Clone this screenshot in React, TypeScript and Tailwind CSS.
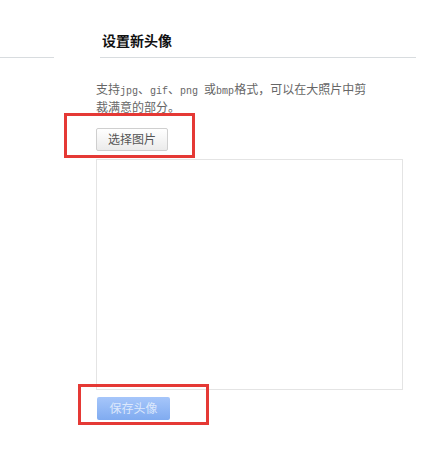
const latin = "font-['Liberation_Mono'] text-[10px]";

export default function App() {
  return (
    <div
      className="relative w-[434px] h-[460px] bg-white overflow-hidden"
      style={{ fontFamily: '"Liberation Sans", "Noto Sans CJK SC", sans-serif' }}
    >
      <div className="flex">
        <div className="w-[54px] h-[58px] border-b border-[#d8dcdf]" />
        <div className="ml-[46px] w-[316px] h-[58px] border-b border-[#d8dcdf] pl-[2px] pt-[33px]">
          <h2 className="text-[14px] leading-[17px] font-bold text-[#111]">设置新头像</h2>
        </div>
      </div>

      <div className="ml-[96px] w-[310px]">
        <p className="mt-[24px] text-[12px] leading-[17px] text-[#666]">
          支持<span className={latin}>jpg</span>、<span className={latin}>gif</span>、
          <span className={latin}>png </span>或<span className={latin}>bmp</span>
          格式，可以在大照片中剪
          <br />
          裁满意的部分。
        </p>
        <button className="mt-[11px] w-[72px] h-[23px] border border-[#cfcfcf] rounded-[2px] bg-gradient-to-b from-white to-[#ebebeb] text-[12px] text-[#555]">
          选择图片
        </button>
        <div className="mt-[8px] w-[307px] h-[231px] border border-[#e4e4e4]" />
        <button className="mt-[7px] ml-[1px] w-[73px] h-[23px] rounded-[2px] bg-gradient-to-b from-[#a6c6fa] to-[#80abf0] text-[12px] text-[#dce8fc]">
          保存头像
        </button>
      </div>

      <div className="absolute left-[64px] top-[113px] w-[131px] h-[45px] border-[3px] border-[#e53935]" />
      <div className="absolute left-[78px] top-[384px] w-[131px] h-[41px] border-[3px] border-[#e53935]" />
    </div>
  );
}
